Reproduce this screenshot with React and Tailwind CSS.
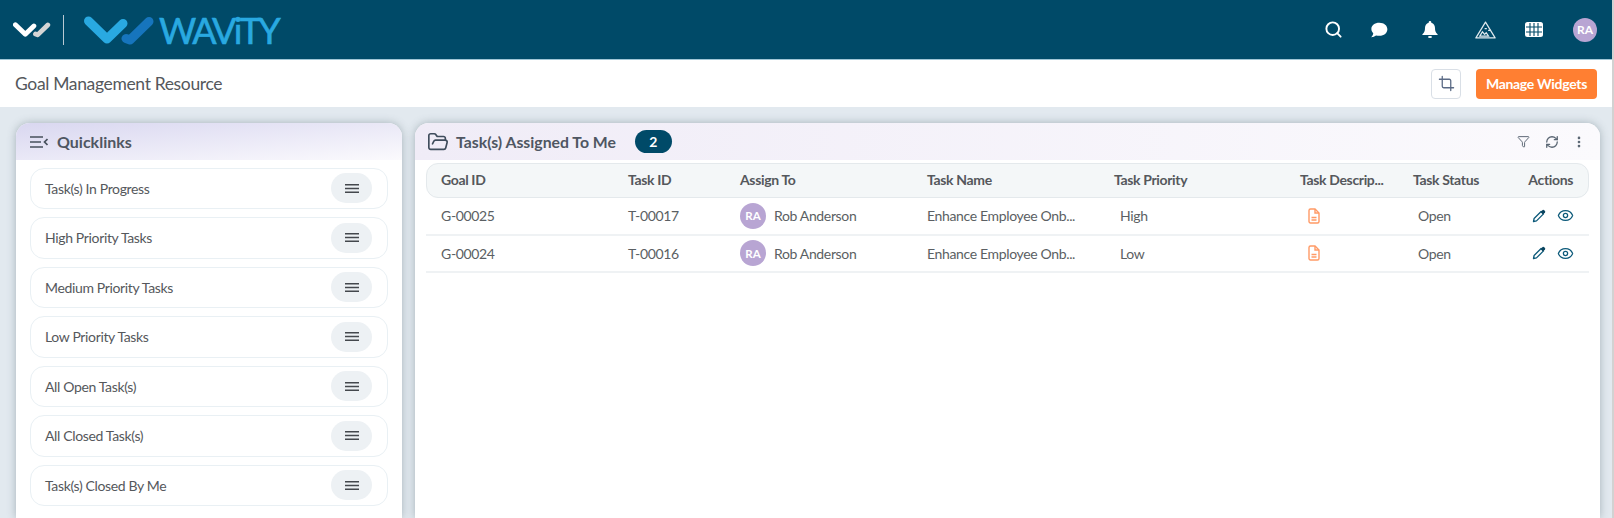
import { Search, RefreshCw, EllipsisVertical, Filter, Crop, Eye, FolderOpen } from 'lucide-react';

const quicklinks = [
    'Task(s) In Progress',
    'High Priority Tasks',
    'Medium Priority Tasks',
    'Low Priority Tasks',
    'All Open Task(s)',
    'All Closed Task(s)',
    'Task(s) Closed By Me',
];

const tasks = [
    { goal: 'G-00025', task: 'T-00017', priority: 'High' },
    { goal: 'G-00024', task: 'T-00016', priority: 'Low' },
];

const gridCols = 'grid grid-cols-[187px_112px_187px_187px_186px_113px_1fr]';

const LogoMark = ({ className, left, right }) => (
    <svg viewBox="0 0 71 30" className={className}>
        <path d="M4.500 6 L23 24 L39 8.500" fill="none" stroke={left} strokeWidth="9" strokeLinecap="round" strokeLinejoin="round" />
        <path d="M42 23.500 L46 25 L65 6.500" fill="none" stroke={right} strokeWidth="9" strokeLinecap="round" strokeLinejoin="round" />
    </svg>
);

const Avatar = ({ className }) => (
    <div className={`flex items-center justify-center rounded-full bg-[#b8a5d3] font-bold text-white ${className}`}>RA</div>
);

const DocIcon = () => (
    <svg viewBox="0 0 12 16" className="h-[16px] w-[12px]" fill="none" stroke="#ff9a66" strokeWidth="1.400">
        <path d="M2.500 1h4.500l4 4v8.500a1.500 1.500 0 0 1-1.500 1.500h-7A1.500 1.500 0 0 1 1 13.500V2.500A1.500 1.500 0 0 1 2.500 1z" />
        <path d="M7 1v4h4M3.500 9.500h5M3.500 12h5" />
    </svg>
);

const PenIcon = () => (
    <svg viewBox="0 0 14 14" className="h-[14px] w-[14px]">
        <path d="M1.500 12.500l.6-3 7-7 2.400 2.400-7 7z" fill="none" stroke="#0d5a7a" strokeWidth="1.300" strokeLinejoin="round" />
        <path d="M8.600 3l2-2a1 1 0 0 1 1.300 0l1.100 1.100a1 1 0 0 1 0 1.300l-2 2z" fill="#0b4560" />
    </svg>
);

const BarsIcon = () => (
    <svg viewBox="0 0 14 9" className="h-[9px] w-[14px]" fill="none" stroke="#44484d" strokeWidth="1.500">
        <path d="M0 .800h14M0 4.500h14M0 8.200h14" />
    </svg>
);

const App = () => {
    return (
        <div className="flex h-[518px] w-[1614px] overflow-hidden bg-[#e2e9ef] font-['Lato',sans-serif] text-[#55585c]">
            <div className="flex min-w-0 flex-1 flex-col">
                <header className="flex h-[60px] shrink-0 items-center justify-between border-b border-[#9fc6d6] bg-[#004a68] pl-[13px] pr-[15px]">
                    <div className="flex items-center">
                        <LogoMark className="h-[17px] w-[38px]" left="#ffffff" right="#d5d5d5" />
                        <div className="ml-[12px] h-[30px] w-px bg-[#b9c9d2]" />
                        <LogoMark className="ml-[20px] h-[30px] w-[71px]" left="#29a9e1" right="#1675bd" />
                        <span className="ml-[4px] text-[36px] leading-none tracking-[-2.600px] text-[#29a9e1] [-webkit-text-stroke:0.6px_#29a9e1]">WAViTY</span>
                    </div>
                    <div className="flex items-center text-white">
                        <Search className="h-[19px] w-[19px]" strokeWidth={2.400} />
                        <svg viewBox="0 0 24 22" className="ml-[27px] h-[16px] w-[18px]" fill="currentColor">
                            <path d="M12.500 1C6 1 1.500 4.500 1.500 9.500c0 2.300 1 4.300 2.600 5.800C3.800 17.500 2.800 19.400 1 21c2.800-.3 5.300-1.300 7-2.500 1.400.4 2.900.5 4.500.5C19 19 23.500 15 23.500 10S19 1 12.500 1z" />
                        </svg>
                        <svg viewBox="0 0 16 17" className="ml-[34px] h-[17px] w-[16px]" fill="currentColor">
                            <path d="M8 0a1.300 1.300 0 0 1 1.300 1.300v.5C11.800 2.400 13 4.500 13 7c0 3 .6 4.400 2.600 6.300V14H.4v-.7C2.400 11.400 3 10 3 7c0-2.500 1.200-4.600 3.700-5.200v-.5A1.300 1.300 0 0 1 8 0z" />
                            <ellipse cx="8" cy="16" rx="2" ry="1" />
                        </svg>
                        <svg viewBox="0 0 24 20" className="ml-[37px] h-[18px] w-[21px]" fill="none" stroke="#dfe9ee" strokeWidth="1.400">
                            <path d="M12 1 L23 19 H1 Z" strokeLinejoin="round" />
                            <path d="M5.500 17l3-5 2.500 3 1.800-2 2.700 4zM11 8.500h2.500M15 10.500h3" />
                        </svg>
                        <svg viewBox="0 0 18 15" className="ml-[29px] h-[15px] w-[18px]">
                            <rect width="18" height="15" rx="2.500" fill="#ffffff" />
                            <path d="M1 5h16M1 10h16M5 1v13M9 1v13M13 1v13" fill="none" stroke="#004a68" strokeWidth="1.100" />
                        </svg>
                        <Avatar className="ml-[30px] h-[24px] w-[24px] text-[12px]" />
                    </div>
                </header>

                <div className="flex h-[47px] shrink-0 items-center justify-between bg-white pl-[15px] pr-[15px]">
                    <h1 className="pt-[1px] text-[17.500px] font-normal tracking-[-0.350px]">Goal Management Resource</h1>
                    <div className="flex items-center">
                        <button className="flex h-[30px] w-[30px] items-center justify-center rounded-[4px] border border-[#d9dfe6] bg-white">
                            <Crop className="h-[17px] w-[17px] text-[#5a6a85]" strokeWidth={1.800} />
                        </button>
                        <button className="ml-[15px] h-[30px] w-[121px] rounded-[4px] bg-[#ff7f32] text-[14px] font-bold tracking-[-0.300px] text-white">Manage Widgets</button>
                    </div>
                </div>

                <main className="flex min-h-0 flex-1 pl-[16px] pr-[12px] pt-[16px]">
                    <section className="w-[386px] shrink-0 rounded-t-[14px] bg-white shadow-[0_0_8px_rgba(90,110,120,0.45)]">
                        <div className="flex h-[37px] items-center rounded-t-[14px] bg-gradient-to-br from-[#d9d7f0] to-[#fbfafd] pl-[14px]">
                            <svg viewBox="0 0 18 14" className="h-[14px] w-[18px]" fill="none" stroke="#47505c" strokeWidth="1.700">
                                <path d="M0 2h13M0 7h11M0 12h13M17.500 4l-3 3 3 3" />
                            </svg>
                            <h2 className="ml-[9px] text-[16px] font-bold text-[#4f5662]">Quicklinks</h2>
                        </div>
                        <ul className="flex flex-col gap-[8px] px-[14px] pt-[7.500px]">
                            {quicklinks.map((item) => (
                                <li key={item} className="flex h-[41.500px] items-center justify-between rounded-[14px] border border-[#e9f0f4] pl-[14px] pr-[15px] text-[14px] tracking-[-0.350px]">
                                    <span>{item}</span>
                                    <span className="flex h-[30px] w-[41px] items-center justify-center rounded-full bg-[#edf1f4]">
                                        <BarsIcon />
                                    </span>
                                </li>
                            ))}
                        </ul>
                    </section>

                    <section className="ml-[13px] flex-1 rounded-t-[14px] bg-white shadow-[0_0_8px_rgba(90,110,120,0.45)]">
                        <div className="flex h-[37px] items-center justify-between rounded-t-[14px] bg-gradient-to-r from-[#f0ecf7] to-[#fbfafd] pl-[12px] pr-[14px]">
                            <div className="flex items-center">
                                <FolderOpen className="h-[22px] w-[22px] text-[#3f4c5c]" strokeWidth={1.800} />
                                <h2 className="ml-[7px] text-[15.800px] font-bold text-[#4f5662]">Task(s) Assigned To Me</h2>
                                <span className="ml-[19px] flex h-[23px] w-[37px] items-center justify-center rounded-full bg-[#004a68] text-[14px] font-bold text-white">2</span>
                            </div>
                            <div className="flex items-center text-[#5a6673]">
                                <Filter className="h-[13px] w-[13px]" strokeWidth={1.800} />
                                <RefreshCw className="ml-[15px] h-[14px] w-[14px]" strokeWidth={2.200} />
                                <EllipsisVertical className="ml-[13px] h-[14px] w-[14px]" strokeWidth={2.600} />
                            </div>
                        </div>

                        <div className="px-[11px] pt-[3px]">
                            <div className={`${gridCols} h-[35px] items-center rounded-[12px] border border-[#e4e9ec] bg-[#f4f7f8] pb-[2px] pl-[14px] text-[14px] font-bold tracking-[-0.350px]`}>
                                <div>Goal ID</div>
                                <div>Task ID</div>
                                <div>Assign To</div>
                                <div>Task Name</div>
                                <div>Task Priority</div>
                                <div>Task Descrip...</div>
                                <div className="flex justify-between pr-[15px]">
                                    <span>Task Status</span>
                                    <span>Actions</span>
                                </div>
                            </div>
                            {tasks.map((row) => (
                                <div key={row.goal} className={`${gridCols} h-[37.500px] items-center border-b-2 border-[#eff2f4] pl-[15px] text-[14px] tracking-[-0.350px] text-[#5b5f63]`}>
                                    <div>{row.goal}</div>
                                    <div>{row.task}</div>
                                    <div className="flex items-center">
                                        <Avatar className="h-[26px] w-[26px] text-[11.500px] tracking-normal" />
                                        <span className="ml-[8px]">Rob Anderson</span>
                                    </div>
                                    <div>Enhance Employee Onb...</div>
                                    <div className="pl-[6px]">{row.priority}</div>
                                    <div className="pl-[8px]"><DocIcon /></div>
                                    <div className="flex items-center justify-between pl-[5px] pr-[15px]">
                                        <span>Open</span>
                                        <span className="flex items-center gap-[11px]">
                                            <PenIcon />
                                            <Eye className="h-[17px] w-[17px] text-[#0d5a7a]" strokeWidth={1.800} />
                                        </span>
                                    </div>
                                </div>
                            ))}
                        </div>
                    </section>
                </main>
            </div>
            <div className="w-[2px] shrink-0 bg-[#d2d2d2]" />
        </div>
    );
};

export default App;
